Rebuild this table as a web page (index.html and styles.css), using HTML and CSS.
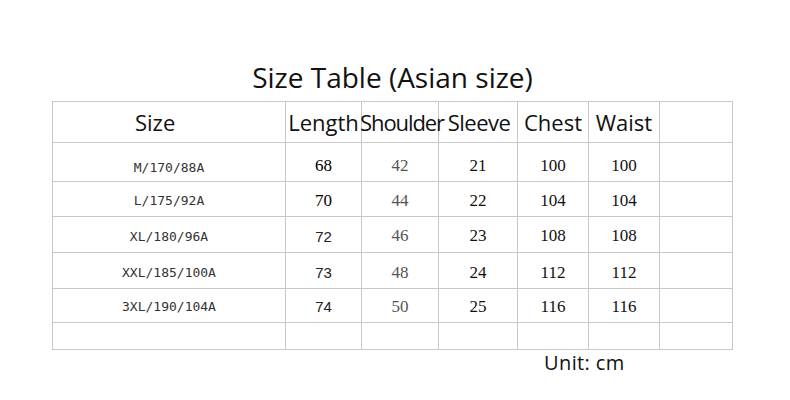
FILE: index.html
```html
<!DOCTYPE html>
<html lang="en">
<head>
<meta charset="utf-8">
<title>Size Table</title>
<link rel="stylesheet" href="styles.css">
</head>
<body>
<main class="sheet">
  <h1 class="title">Size Table (Asian size)</h1>
  <div class="grid">
    <div class="cell head head-size">Size</div>
    <div class="cell head">Length</div>
    <div class="cell head head-tight">Shoulder</div>
    <div class="cell head head-sleeve">Sleeve</div>
    <div class="cell head">Chest</div>
    <div class="cell head">Waist</div>
    <div class="cell head"></div>

    <div class="cell label r1">M/170/88A</div>
    <div class="cell num serif dark r1">68</div>
    <div class="cell num serif gray r1">42</div>
    <div class="cell num serif r1">21</div>
    <div class="cell num serif r1">100</div>
    <div class="cell num serif r1">100</div>
    <div class="cell r1"></div>

    <div class="cell label r2">L/175/92A</div>
    <div class="cell num serif dark r2">70</div>
    <div class="cell num serif gray r2">44</div>
    <div class="cell num serif r2">22</div>
    <div class="cell num serif r2">104</div>
    <div class="cell num serif r2">104</div>
    <div class="cell r2"></div>

    <div class="cell label r3">XL/180/96A</div>
    <div class="cell num sans r3">72</div>
    <div class="cell num serif gray r3">46</div>
    <div class="cell num serif r3">23</div>
    <div class="cell num serif r3">108</div>
    <div class="cell num serif r3">108</div>
    <div class="cell r3"></div>

    <div class="cell label r4">XXL/185/100A</div>
    <div class="cell num sans r4">73</div>
    <div class="cell num serif gray r4">48</div>
    <div class="cell num serif r4">24</div>
    <div class="cell num serif r4">112</div>
    <div class="cell num serif r4">112</div>
    <div class="cell r4"></div>

    <div class="cell label r5">3XL/190/104A</div>
    <div class="cell num sans r5">74</div>
    <div class="cell num serif gray r5">50</div>
    <div class="cell num serif r5">25</div>
    <div class="cell num serif r5">116</div>
    <div class="cell num serif r5">116</div>
    <div class="cell r5"></div>

    <div class="cell r6"></div>
    <div class="cell r6"></div>
    <div class="cell r6"></div>
    <div class="cell r6"></div>
    <div class="cell r6"></div>
    <div class="cell r6"></div>
    <div class="cell r6"></div>
  </div>
  <p class="unit">Unit: cm</p>
</main>
</body>
</html>
```

FILE: styles.css
```css
html, body {
  margin: 0;
  padding: 0;
  background: #ffffff;
}

.sheet {
  width: 681px;
  padding: 57px 0 0 52px;
  font-family: "Open Sans", "Noto Sans", sans-serif;
  color: #111;
}

.title {
  margin: 0 0 4px 0;
  height: 40px;
  line-height: 40px;
  font-size: 28px;
  font-weight: 400;
  text-align: center;
  color: #111;
}

.grid {
  display: grid;
  grid-template-columns: 233px 76px 77px 79px 71px 71px 73px;
  grid-template-rows: 41px 39px 35px 36px 36px 34px 27px;
  border-top: 1px solid #c8c8c8;
  border-left: 1px solid #c8c8c8;
  width: 680px;
}

.cell {
  box-sizing: border-box;
  border-right: 1px solid #c8c8c8;
  border-bottom: 1px solid #c8c8c8;
  display: flex;
  align-items: center;
  justify-content: center;
  white-space: nowrap;
}

.head {
  font-size: 22px;
  padding-bottom: 1px;
}

.head-size {
  justify-content: flex-start;
  padding-left: 82px;
}

.head-tight {
  letter-spacing: -1.1px;
  padding-left: 4px;
}

.head-sleeve {
  letter-spacing: -0.5px;
  padding-left: 2px;
}

.label {
  font-family: "DejaVu Sans Mono", "Liberation Mono", monospace;
  font-size: 13px;
  color: #333;
}

.num {
  font-size: 17px;
}

.serif {
  font-family: "Liberation Serif", "DejaVu Serif", serif;
}

.sans {
  font-family: "Liberation Sans", Arial, sans-serif;
  font-size: 15px;
  color: #222;
}

.dark {
  color: #000;
}

.gray {
  color: #555;
}

.num.r1 { padding-top: 7px; }
.num.r2 { padding-top: 3px; }
.num.r3 { padding-top: 3px; }
.num.r4 { padding-top: 4px; }
.num.r5 { padding-top: 2px; }

.label.r1 { padding-top: 10px; }
.label.r2 { padding-top: 2px; }
.label.r3 { padding-top: 3px; }
.label.r4 { padding-top: 3px; }
.label.r5 { padding-top: 2px; }

.unit {
  margin: 0;
  padding-left: 492px;
  font-size: 20px;
  letter-spacing: 0.4px;
  line-height: 26px;
  color: #111;
}
```
